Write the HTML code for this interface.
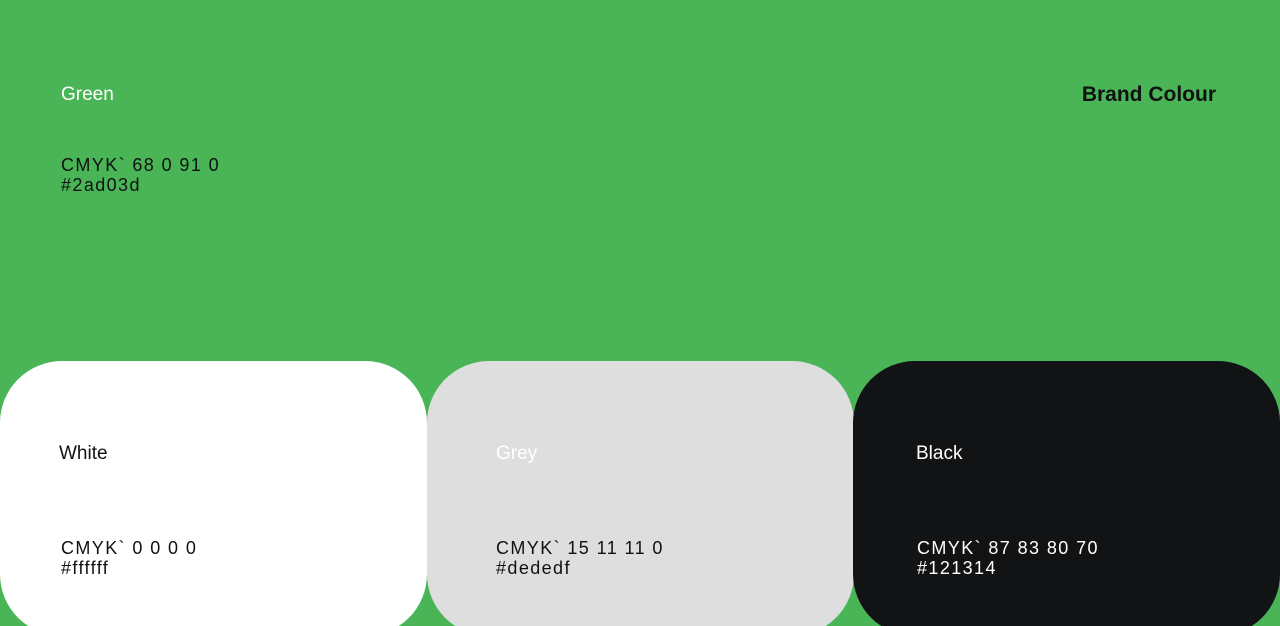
<!DOCTYPE html>
<html style="overflow:hidden;height:626px"><head><style>
body{margin:0;width:1280px;height:626px;background:#4ab556;position:relative;overflow:hidden;font-family:"Liberation Sans",sans-serif}
.a{position:absolute;white-space:nowrap}
.t{font-size:19px;letter-spacing:0}
.c{font-size:18px;line-height:20px;letter-spacing:1.4px}
.card{position:absolute;top:361px;width:427px;height:275px;border-radius:62px}
</style></head><body>
<div class="a t" style="left:61px;top:84px;color:#fff">Green</div>
<div class="a" style="right:64px;top:83px;font-size:21px;font-weight:bold;color:#111">Brand Colour</div>
<div class="a c" style="left:61px;top:155px;color:#111">CMYK` 68 0 91 0<br>#2ad03d</div>
<div class="card" style="left:0;background:#fff"></div>
<div class="card" style="left:427px;background:#dededf"></div>
<div class="card" style="left:853px;background:#121314"></div>
<div class="a t" style="left:59px;top:443px;color:#111">White</div>
<div class="a c" style="left:61px;top:538px;color:#111">CMYK` 0 0 0 0<br>#ffffff</div>
<div class="a t" style="left:496px;top:443px;color:#fff">Grey</div>
<div class="a c" style="left:496px;top:538px;color:#111">CMYK` 15 11 11 0<br>#dededf</div>
<div class="a t" style="left:916px;top:443px;color:#fff">Black</div>
<div class="a c" style="left:917px;top:538px;color:#fff">CMYK` 87 83 80 70<br>#121314</div>
</body></html>
